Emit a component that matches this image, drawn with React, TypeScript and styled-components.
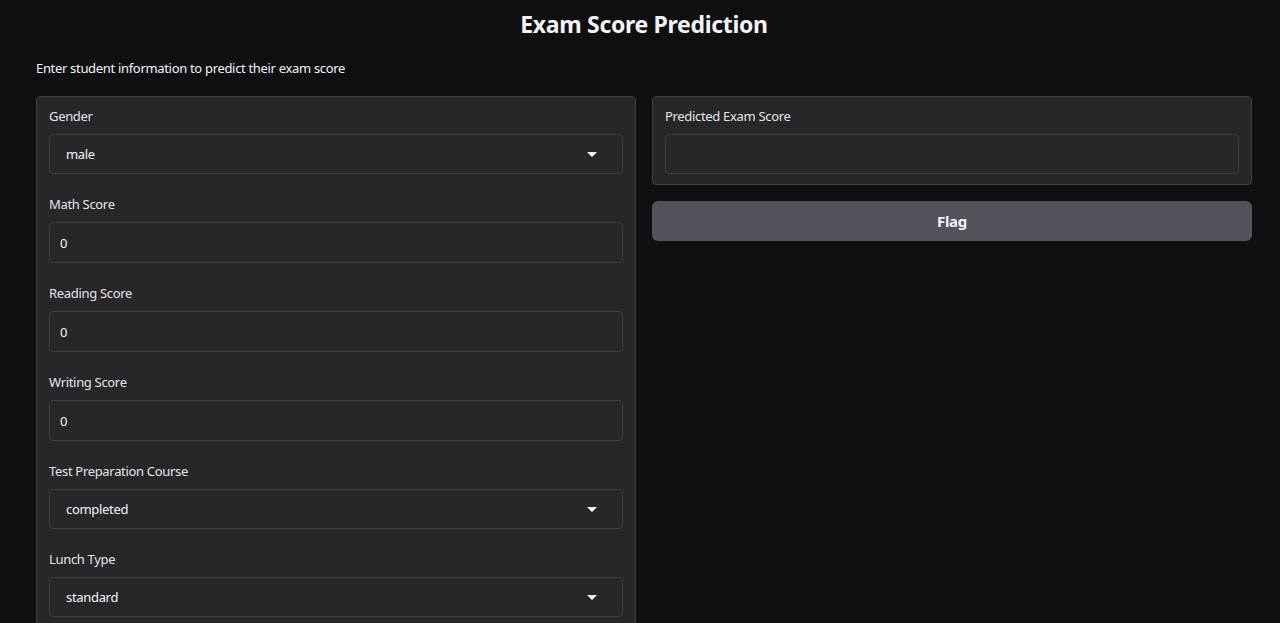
import React from "react";
import styled, { createGlobalStyle } from "styled-components";

const Global = createGlobalStyle`
  html, body { margin: 0; padding: 0; background: #0f0f11; }
  body { font-family: "Noto Sans", "Liberation Sans", sans-serif; color: #f4f4f5; }
  * { box-sizing: border-box; }
`;

const Page = styled.div`
  min-height: 623px;
  padding: 8px 28px 0 36px;
  font-family: "Noto Sans", sans-serif;
  letter-spacing: -0.02em;
`;

const Title = styled.h1`
  margin: 0;
  text-align: center;
  font-size: 23px;
  line-height: 32px;
  font-weight: 700;
  color: #f4f4f5;
`;

const Desc = styled.p`
  margin: 20px 0 0;
  font-size: 13px;
  line-height: 16px;
  color: #f4f4f5;
`;

const Row = styled.div`
  display: flex;
  gap: 16px;
  margin-top: 20px;
  align-items: flex-start;
`;

const Column = styled.div`
  flex: 1;
  display: flex;
  flex-direction: column;
  gap: 16px;
  min-width: 0;
`;

const Block = styled.div`
  background: #27272a;
  border: 1px solid #3f3f46;
  border-radius: 4px;
  padding: 9px 12px 10px;
  display: flex;
  flex-direction: column;
  gap: 20px;
`;

const Field = styled.div`
  display: flex;
  flex-direction: column;
`;

const Label = styled.span`
  font-size: 13px;
  line-height: 20px;
  color: #e4e4e7;
  margin-bottom: 8px;
`;

const Box = styled.div<{ $h: number; $pad: number }>`
  height: ${(p) => p.$h}px;
  border: 1px solid #3f3f46;
  border-radius: 4px;
  background: #27272a;
  display: flex;
  align-items: center;
  padding: 0 ${(p) => p.$pad}px;
  font-size: 13px;
  color: #f4f4f5;
`;

const Value = styled.span`
  flex: 1;
`;

const Caret = styled.svg`
  width: 10px;
  height: 5px;
  margin-right: 9px;
  margin-top: 1px;
`;

const Button = styled.button`
  height: 40px;
  border: none;
  border-radius: 6px;
  background: #52525b;
  color: #f4f4f5;
  font-family: "Noto Sans", sans-serif;
  font-weight: 700;
  font-size: 15px;
  letter-spacing: -0.02em;
`;

const Dropdown = ({ label, value }: { label: string; value: string }) => (
  <Field>
    <Label>{label}</Label>
    <Box $h={40} $pad={16}>
      <Value>{value}</Value>
      <Caret viewBox="0 0 10 5">
        <path d="M0 0 L10 0 L5.6 4.6 Q5 5.2 4.4 4.6 Z" fill="#f4f4f5" />
      </Caret>
    </Box>
  </Field>
);

const NumberField = ({ label }: { label: string }) => (
  <Field>
    <Label>{label}</Label>
    <Box $h={41} $pad={10}>
      <Value>0</Value>
    </Box>
  </Field>
);

export default function App() {
  return (
    <>
      <Global />
      <Page>
        <Title>Exam Score Prediction</Title>
        <Desc>Enter student information to predict their exam score</Desc>
        <Row>
          <Column>
            <Block>
              <Dropdown label="Gender" value="male" />
              <NumberField label="Math Score" />
              <NumberField label="Reading Score" />
              <NumberField label="Writing Score" />
              <Dropdown label="Test Preparation Course" value="completed" />
              <Dropdown label="Lunch Type" value="standard" />
            </Block>
          </Column>
          <Column>
            <Block>
              <Field>
                <Label>Predicted Exam Score</Label>
                <Box $h={40} $pad={10} />
              </Field>
            </Block>
            <Button>Flag</Button>
          </Column>
        </Row>
      </Page>
    </>
  );
}
